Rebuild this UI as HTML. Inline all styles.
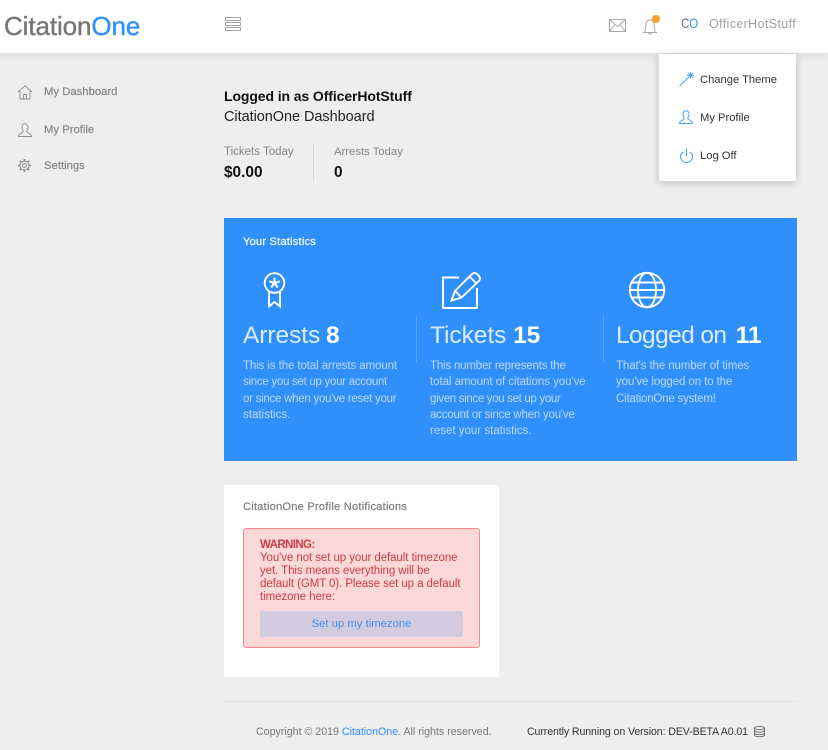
<!DOCTYPE html>
<html><head><meta charset="utf-8"><style>
*{box-sizing:border-box}
html,body{margin:0;padding:0}
body{width:828px;height:750px;overflow:hidden;background:#eeeeee;position:relative;font-family:"Liberation Sans",sans-serif}
.t{position:absolute;white-space:nowrap;line-height:16px}
.m{-webkit-text-stroke:.2px currentColor}
svg{position:absolute;overflow:visible}
.blk{position:absolute}
.l{display:block;height:16.25px;line-height:16.25px}
</style></head><body>
<div class="blk" style="left:0;top:0;width:828px;height:53px;background:#fff;box-shadow:0 2px 8px rgba(60,70,100,.13)"></div>
<div class="t" style="left:4px;top:11px;font-size:26px;line-height:30px;color:#767676;letter-spacing:-.1px;-webkit-text-stroke:.35px currentColor">Citation<span style="color:#2f8fff">One</span></div>
<svg style="left:225px;top:17px" width="17" height="15" fill="none" stroke="#a8a8a8" stroke-width="1"><rect x=".5" y=".5" width="15" height="3"/><rect x=".5" y="5.5" width="15" height="3"/><rect x=".5" y="10.5" width="15" height="3"/></svg>
<svg style="left:609px;top:19px" width="17" height="14" fill="none" stroke="#a8a8a8" stroke-width="1"><rect x=".5" y=".5" width="16" height="12"/><path d="M.5 .5L8.500 7.500L16.500 .5M.5 12.500L6 5.500M16.500 12.500L11 5.500"/></svg>
<svg style="left:642px;top:18px" width="16" height="16" fill="none" stroke="#a8a8a8" stroke-width="1"><path d="M1 14.500H15M2.500 14.500C4 12 3.500 9 4 6C4.500 3.500 6 2 8 2C10 2 11.500 3.500 12 6C12.500 9 12 12 13.500 14.500M6.500 15C7 16.500 9 16.500 9.500 15"/></svg>
<div class="blk" style="left:652px;top:15px;width:8px;height:8px;border-radius:50%;background:#f5a030"></div>
<div class="t" style="left:681px;top:15px;font-size:14px;color:#66788f;letter-spacing:0;transform:scaleX(.82);transform-origin:left center">C<span style="color:#2f8fff">O</span></div>
<div class="t" style="left:709px;top:16px;font-size:12.500px;color:#a0a0a0;letter-spacing:.37px">OfficerHotStuff</div>

<svg style="left:18px;top:85px" width="14" height="15" fill="none" stroke="#8c8c8c" stroke-width=".9"><path d="M0 7L7 .8L14 7M2 6V14H12V6M5.500 14V9.500H8.500V14"/></svg>
<div class="t m" style="left:44px;top:84px;font-size:11.300px;color:#858585">My Dashboard</div>
<svg style="left:18px;top:123px" width="14" height="14" fill="none" stroke="#8c8c8c" stroke-width=".9"><path d="M.5 13.500H13.500C13.500 11 11 10.500 9.500 9.500C8.500 8.800 8.800 7.800 9.500 6.800C10.500 5 10.300 .7 7 .7C3.700 .7 3.500 5 4.500 6.800C5.200 7.800 5.500 8.800 4.500 9.500C3 10.500 .5 11 .5 13.500Z"/></svg>
<div class="t m" style="left:44px;top:122px;font-size:11.300px;color:#858585">My Profile</div>
<svg style="left:18px;top:159px" width="13" height="13" fill="none" stroke="#8c8c8c" stroke-width=".9"><circle cx="6.500" cy="6.500" r="2"/><circle cx="6.500" cy="6.500" r="4.500"/><path stroke-width="1.800" d="M6.500 0V2M6.500 11V13M0 6.500H2M11 6.500H13M1.900 1.900L3.300 3.300M9.700 9.700L11.100 11.100M1.900 11.100L3.300 9.700M9.700 3.300L11.100 1.900"/></svg>
<div class="t m" style="left:44px;top:158px;font-size:11.300px;color:#858585">Settings</div>

<div class="t" style="left:224px;top:88px;font-size:14px;font-weight:bold;color:#111;letter-spacing:-.1px">Logged in as OfficerHotStuff</div>
<div class="t" style="left:224px;top:109px;font-size:14.500px;color:#222;letter-spacing:-.05px">CitationOne Dashboard</div>
<div class="t" style="left:224px;top:144px;font-size:11.500px;color:#858585">Tickets Today</div>
<div class="t" style="left:224px;top:165px;font-size:15.400px;font-weight:bold;color:#111">$0.00</div>
<div class="blk" style="left:313px;top:143px;width:1px;height:38px;background:#d8d8d8"></div>
<div class="t" style="left:334px;top:144px;font-size:11.300px;color:#858585">Arrests Today</div>
<div class="t" style="left:334px;top:165px;font-size:15.400px;font-weight:bold;color:#111">0</div>

<div class="blk" style="left:659px;top:54px;width:137px;height:127px;background:#fff;box-shadow:0 2px 8px rgba(0,0,0,.2)"></div>
<svg style="left:679px;top:71px" width="16" height="16" fill="none" stroke="#4d9fff" stroke-width="1"><path d="M.5 15L10 6M11.500 1V7.500M8 4.200H15M9 1.800L14 6.800M14 1.800L9 6.800"/></svg>
<div class="t" style="left:700px;top:72px;font-size:11.200px;color:#333">Change Theme</div>
<svg style="left:679px;top:110px" width="14" height="14" fill="none" stroke="#4d9fff" stroke-width="1"><path d="M.5 13.500H13.500C13.500 11 11 10.500 9.500 9.500C8.500 8.800 8.800 7.800 9.500 6.800C10.500 5 10.300 .7 7 .7C3.700 .7 3.500 5 4.500 6.800C5.200 7.800 5.500 8.800 4.500 9.500C3 10.500 .5 11 .5 13.500Z"/></svg>
<div class="t" style="left:700px;top:110px;font-size:11.200px;color:#333">My Profile</div>
<svg style="left:680px;top:148px" width="13" height="15" fill="none" stroke="#4d9fff" stroke-width="1"><path d="M3.500 4C1.500 5 .5 7 .5 8.500A6 6 0 0 0 12.500 8.500C12.500 7 11.500 5 9.500 4M6.500 .5V8"/></svg>
<div class="t" style="left:700px;top:148px;font-size:11.200px;color:#333">Log Off</div>

<div class="blk" style="left:224px;top:218px;width:573px;height:243px;background:#2f8ffb"></div>
<div class="t m" style="left:243px;top:234px;font-size:11px;color:#fff;letter-spacing:.25px">Your Statistics</div>
<svg style="left:263px;top:272px" width="23" height="36" fill="none" stroke="#fff" stroke-width="1.900"><circle cx="11.500" cy="11" r="9.800"/><path d="M6 20V34.500L11.500 30L17 34.500V20"/><path stroke-width="2" d="M11.500 5.500V11M11.500 11L16.700 9.300M11.500 11L14.700 15.500M11.500 11L8.300 15.500M11.500 11L6.300 9.300"/></svg>
<svg style="left:442px;top:271px" width="38" height="39" fill="none" stroke="#fff" stroke-width="1.900"><path d="M17 6.500H1V37H35V17"/><path d="M9.500 29.500L13 20L30 3Q32.500 1 35 3L37 5Q39 7.500 37 10L19.500 26.500Z"/><path d="M13 20L19.500 26.500M27.500 5.500L34.500 12.500"/></svg>
<svg style="left:628px;top:272px" width="38" height="37" fill="none" stroke="#fff" stroke-width="1.900"><circle cx="19" cy="18" r="17.200"/><ellipse cx="19" cy="18" rx="9" ry="17.200"/><path d="M4 10.500H34M1.800 18H36.200M4 25.500H34"/></svg>
<div class="t" style="left:243px;top:321px;font-size:24.500px;line-height:30px;color:#dcecff;letter-spacing:-.05px">Arrests <b style="color:#fff;margin-left:-1px">8</b></div>
<div class="t" style="left:430px;top:321px;font-size:24.500px;line-height:30px;color:#dcecff;letter-spacing:-.05px">Tickets <b style="color:#fff">15</b></div>
<div class="t" style="left:616px;top:321px;font-size:24.500px;line-height:30px;color:#dcecff;letter-spacing:-.6px">Logged on <b style="color:#fff;letter-spacing:0;margin-left:3px">11</b></div>
<div class="blk" style="left:416px;top:315px;width:1px;height:47px;background:#5ba6fb"></div>
<div class="blk" style="left:603px;top:315px;width:1px;height:47px;background:#5ba6fb"></div>
<div class="t" style="left:243px;top:358px;font-size:11.500px;color:#bcdaff"><span class="l" style="letter-spacing:-.1px">This is the total arrests amount</span><span class="l" style="letter-spacing:-.28px">since you set up your account</span><span class="l" style="letter-spacing:-.26px">or since when you've reset your</span><span class="l">statistics.</span></div>
<div class="t" style="left:430px;top:358px;font-size:11.500px;color:#bcdaff"><span class="l" style="letter-spacing:-.19px">This number represents the</span><span class="l" style="letter-spacing:-.06px">total amount of citations you've</span><span class="l" style="letter-spacing:-.33px">given since you set up your</span><span class="l" style="letter-spacing:-.21px">account or since when you've</span><span class="l">reset your statistics.</span></div>
<div class="t" style="left:616px;top:358px;font-size:11.500px;color:#bcdaff"><span class="l" style="letter-spacing:-.1px">That's the number of times</span><span class="l" style="letter-spacing:-.1px">you've logged on to the</span><span class="l" style="letter-spacing:-.2px">CitationOne system!</span></div>

<div class="blk" style="left:224px;top:485px;width:275px;height:192px;background:#fff"></div>
<div class="t m" style="left:243px;top:499px;font-size:11px;color:#7c7c7c;letter-spacing:.27px">CitationOne Profile Notifications</div>
<div class="blk" style="left:243px;top:528px;width:237px;height:120px;background:#fdd8d9;border:1px solid #f28b8e;border-radius:3px"></div>
<div class="t" style="left:260px;top:539px;font-size:11.500px;line-height:13px;color:#cc3d44;letter-spacing:-.08px"><b style="letter-spacing:-.6px">WARNING:</b><br>You've not set up your default timezone<br>yet. This means everything will be<br>default (GMT 0). Please set up a default<br>timezone here:</div>
<div class="blk" style="left:260px;top:611px;width:203px;height:26px;background:#d3cbe0;border-radius:2px"></div>
<div class="t" style="left:260px;top:616px;width:203px;text-align:center;font-size:11.300px;color:#3f90f0">Set up my timezone</div>

<div class="blk" style="left:224px;top:701px;width:573px;height:1px;background:#e2e2e2"></div>
<div class="t" style="left:256px;top:724px;font-size:10.650px;color:#777">Copyright © 2019 <span style="color:#2f8fff">CitationOne</span>. All rights reserved.</div>
<div class="t" style="left:527px;top:724px;font-size:10.600px;color:#333;letter-spacing:-.1px">Currently Running on Version: DEV-BETA A0.01</div>
<svg style="left:754px;top:726px" width="11" height="11" fill="none" stroke="#666" stroke-width=".9"><ellipse cx="5.500" cy="2" rx="5" ry="1.600"/><path d="M.5 2V9C.5 10 2.500 10.700 5.500 10.700C8.500 10.700 10.500 10 10.500 9V2M.5 4.500C.5 5.500 2.500 6.200 5.500 6.200C8.500 6.200 10.500 5.500 10.500 4.500M.5 7C.5 8 2.500 8.700 5.500 8.700C8.500 8.700 10.500 8 10.500 7"/></svg>
</body></html>
